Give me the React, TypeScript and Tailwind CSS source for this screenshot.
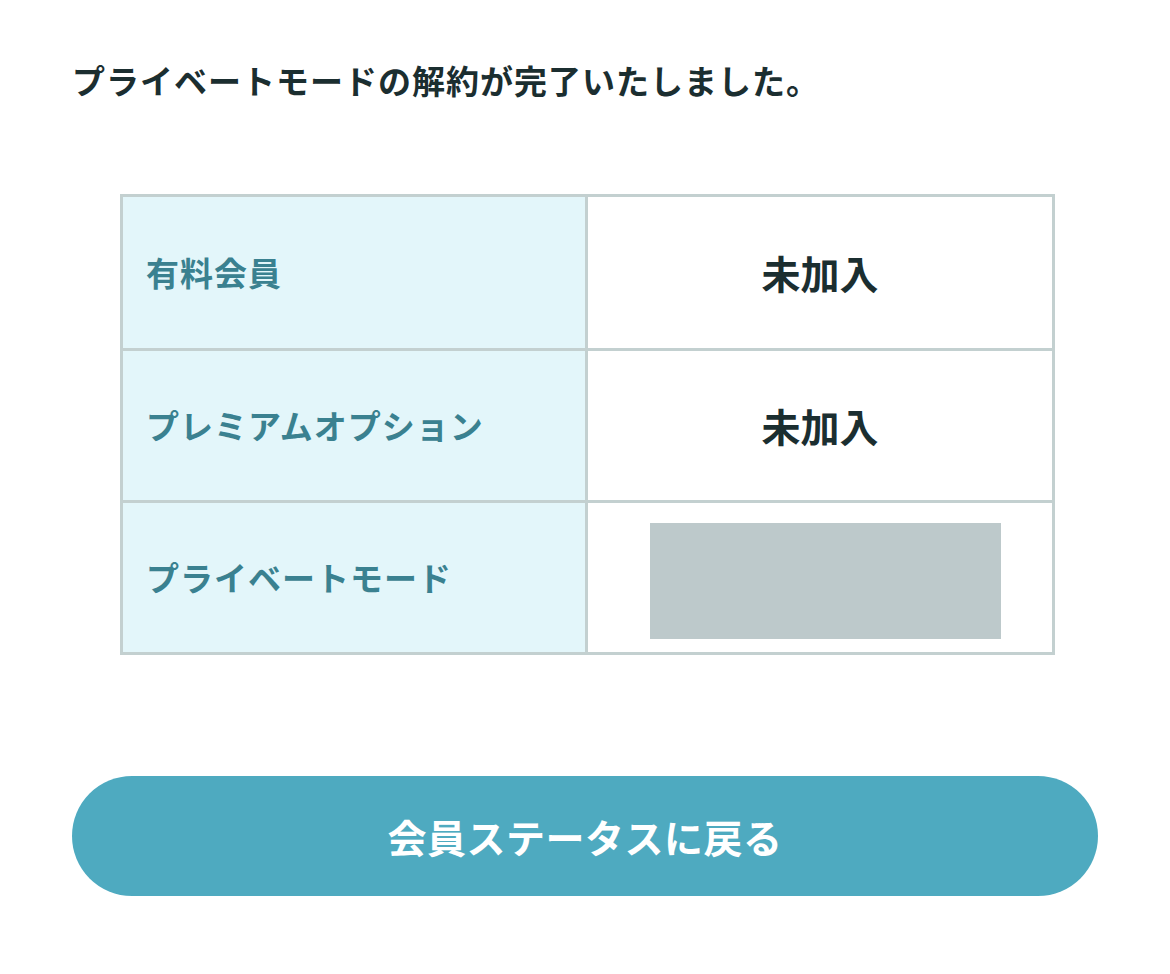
const ROWS = [
  { label: "有料会員", value: "未加入" },
  { label: "プレミアムオプション", value: "未加入" },
  { label: "プライベートモード", value: null },
];

export default function App() {
  return (
    <div
      className="min-h-screen bg-white px-[72px] pt-[58px] text-[#1b2e30]"
      style={{ fontFamily: '"Noto Sans CJK JP", "Noto Sans", sans-serif' }}
    >
      <h1 className="text-[33px] font-bold leading-[44px] tracking-[1px]">
        プライベートモードの解約が完了いたしました。
      </h1>

      <div className="ml-[48px] mr-[43px] mt-[92px] border-[3px] border-[#c3d0d0]">
        {ROWS.map((row, i) => (
          <div
            key={row.label}
            className={`grid grid-cols-[465px_1fr] ${i > 0 ? "h-[152px] border-t-[3px] border-[#c3d0d0]" : "h-[151px]"}`}
          >
            <div className="flex items-center border-r-[3px] border-[#c3d0d0] bg-[#e3f6fa] pl-[23px] text-[33px] font-bold tracking-[1px] text-[#3a8190]">
              {row.label}
            </div>
            <div className="flex items-center justify-center">
              {row.value ? (
                <span className="text-[39px] font-bold">{row.value}</span>
              ) : (
                <div className="ml-[10px] mt-[6px] h-[116px] w-[351px] bg-[#bdc9cb]" />
              )}
            </div>
          </div>
        ))}
      </div>

      <button className="mt-[121px] flex h-[120px] w-[1026px] items-center justify-center rounded-full bg-[#4eaac0] text-[39px] font-bold tracking-[0.5px] text-white">
        会員ステータスに戻る
      </button>
    </div>
  );
}
